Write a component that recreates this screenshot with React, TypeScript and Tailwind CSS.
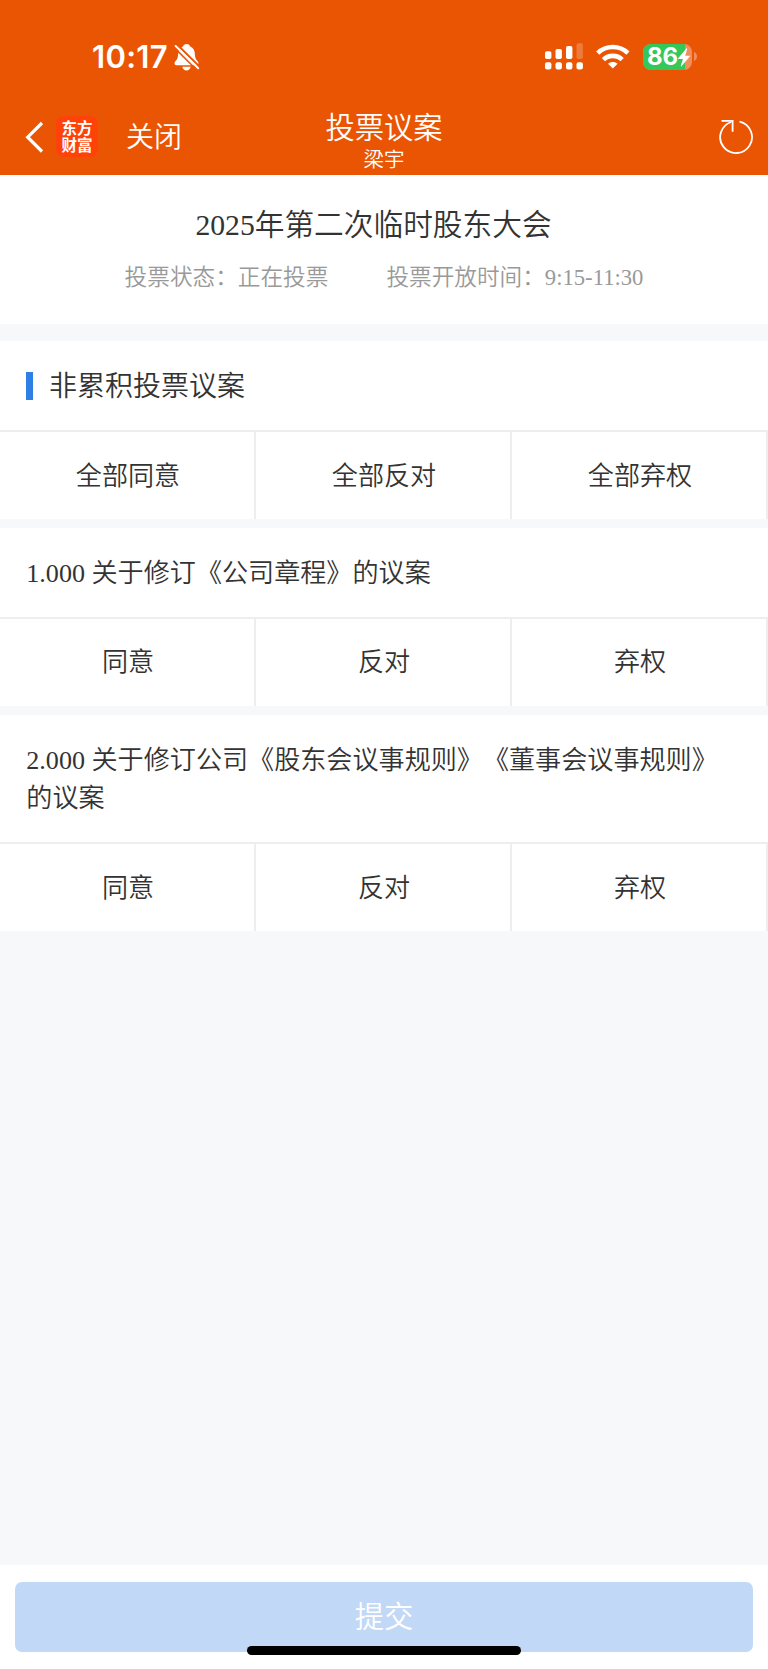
import React from "react";

function BellOff() {
  return (
    <svg className="ml-[8px] mt-[43px] h-[28px] w-[26px] shrink-0" viewBox="174 43 26 28">
      <path
        d="M186.6 44c1.9 0 3.2 1 3.6 2.5 3.2 1.3 4.6 4.2 4.7 7.9.1 3.2 1 4.8 2.3 6.4.9 1.1 1.4 2 1.2 3-.2 1-1.1 1.5-2.4 1.5h-19c-1.300 0-2.200-.5-2.400-1.500-.2-1 .3-1.900 1.200-3 1.300-1.600 2.200-3.200 2.300-6.400.1-3.700 1.700-6.600 4.900-7.900.4-1.500 1.700-2.500 3.600-2.500z"
        fill="#fff"
      />
      <path d="M182.300 66.800h8.400c-.5 2.200-2.100 3.700-4.200 3.700s-3.700-1.500-4.200-3.700z" fill="#fff" />
      <path d="M176.800 44.200L200 67.100" stroke="#ea5504" strokeWidth="2" />
      <path d="M175.600 46L198.200 68.300" stroke="#fff" strokeWidth="2" strokeLinecap="round" />
      <path d="M173 46.300L196.300 69.500" stroke="#ea5504" strokeWidth="1.600" />
    </svg>
  );
}

function Signal() {
  return (
    <svg className="h-[27px] w-[39px]" viewBox="545 43 39 27" fill="#fff">
      <rect x="545" y="51.300" width="6.400" height="7.800" rx="1.800" />
      <rect x="555.500" y="49" width="6.400" height="10.100" rx="1.800" />
      <rect x="566" y="46" width="6.400" height="13.100" rx="1.800" />
      <rect x="576.500" y="43.200" width="6.400" height="15.900" rx="1.800" opacity="0.22" />
      <rect x="545" y="62.200" width="6.400" height="7.400" rx="2" />
      <rect x="555.500" y="62.200" width="6.400" height="7.400" rx="2" />
      <rect x="566" y="62.200" width="6.400" height="7.400" rx="2" />
      <rect x="576.500" y="62.200" width="6.400" height="7.400" rx="2" />
    </svg>
  );
}

function Wifi() {
  return (
    <svg className="ml-[12px] h-[27px] w-[34px]" viewBox="596 43 34 27" fill="none" stroke="#fff" strokeWidth="4.600">
      <path d="M597.700 53.100a21.800 21.800 0 0 1 30.200 0" />
      <path d="M603.400 59.600a13.600 13.600 0 0 1 18.800 0" />
      <path d="M612.800 68.600l-4.800-4.800c2.700-2.400 6.900-2.400 9.600 0z" fill="#fff" stroke="none" />
    </svg>
  );
}

function Battery() {
  return (
    <div className="relative ml-[13px] flex h-[26px] items-center">
      <div className="h-[26px] w-[49px] overflow-hidden rounded-[8px] bg-[#f38d59]">
        <div className="h-full w-[42px] bg-[#34c759]" />
      </div>
      <svg className="ml-[2px] h-[9px] w-[3px]" viewBox="0 0 3 9">
        <path d="M0 0c2 .6 3 2.300 3 4.500S2 8.400 0 9z" fill="#f38d59" />
      </svg>
      <span className="absolute top-0 left-[4px] font-['Inter'] text-[24px] leading-[26px] font-bold">86</span>
      <svg className="absolute top-[4px] left-[34px] h-[19px] w-[14px]" viewBox="0 0 14 19">
        <path d="M9.300.5L1.200 10.300c-.3.4-.1.800.4.800h4.300L3.800 18c-.1.500.4.700.7.300l8.300-9.800c.3-.4.1-.800-.4-.800H8.200L10.200 1c.1-.6-.5-.9-.9-.5z" fill="#fff" />
      </svg>
    </div>
  );
}

function Header() {
  return (
    <header className="h-[175px] shrink-0 bg-[#ea5504] text-white">
      <div className="flex h-[100px] items-start">
        <span className="mt-[39px] ml-[92px] w-[74px] font-['Inter'] text-[31px] leading-[36px] font-semibold tracking-[0.3px] whitespace-nowrap">10:17</span>
        <BellOff />
        <div className="mt-[43px] mr-[71px] ml-auto flex items-center">
          <Signal />
          <Wifi />
          <Battery />
        </div>
      </div>
      <div className="grid h-[75px] grid-cols-3">
        <div className="flex items-start">
          <svg className="mt-[21px] ml-[25px] h-[32px] w-[19px]" viewBox="0 0 19 32" fill="none" stroke="#fff" strokeWidth="3.200">
            <path d="M17 2L2.700 16.200 17 30.500" />
          </svg>
          <div className="mt-[16px] ml-[12px] flex h-[41px] w-[42px] flex-col items-center justify-center rounded-[8px] bg-[#ff4208] text-[15.500px] leading-[17px] font-bold">
            <span>东方</span>
            <span>财富</span>
          </div>
          <span className="mt-[18px] ml-[28px] text-[28px] leading-[40px] font-[350]">关闭</span>
        </div>
        <div className="flex flex-col items-center">
          <h1 className="mt-[8px] text-[29.300px] leading-[40px] font-[350]">投票议案</h1>
          <span className="mt-[-2px] text-[20.500px] leading-[28px]">梁宇</span>
        </div>
        <svg className="mt-[19px] mr-[14px] ml-auto h-[36px] w-[36px]" viewBox="718 119 36 36" fill="none" stroke="#fff" strokeWidth="1.800">
          <path d="M739.500 121.600a15.900 15.900 0 1 1-8.300.4" />
          <path d="M721.500 120.900h11.100v10.800" />
        </svg>
      </div>
    </header>
  );
}

function Options({ labels }: { labels: string[] }) {
  return (
    <div className="grid h-[89px] grid-cols-3 border-t-2 border-[#eeeeee]">
      {labels.map((label) => (
        <button key={label} className="border-r-2 border-[#eeeeee] pt-[2px] pl-[2px] text-[26.100px] leading-[38px]">
          {label}
        </button>
      ))}
    </div>
  );
}

function Proposal({ lines }: { lines: string[] }) {
  return (
    <section className="mt-[9px] bg-white">
      <h3 className="pt-[26.700px] pb-[23.800px] pl-[26.300px] text-[26.100px] leading-[38.400px] font-[350]">
        {lines.map((line) => (
          <span key={line} className="block whitespace-nowrap">{line}</span>
        ))}
      </h3>
      <Options labels={["同意", "反对", "弃权"]} />
    </section>
  );
}

export default function App() {
  return (
    <div
      lang="zh-CN"
      className="flex h-[1669px] w-[768px] flex-col bg-[#f7f8fa] font-['Liberation_Serif','Noto_Sans_CJK_SC',sans-serif] font-[350] text-[#333333] [text-spacing-trim:space-all]"
    >
      <Header />
      <section className="h-[149px] bg-white">
        <h2 className="pt-[29px] pr-[21px] text-center text-[29.700px] leading-[42px] font-[350]">2025年第二次临时股东大会</h2>
        <div className="mt-[15px] flex justify-center gap-[58px] text-[22.650px] leading-[34px] text-[#999999]">
          <span>投票状态：正在投票</span>
          <span>投票开放时间：9:15-11:30</span>
        </div>
      </section>
      <section className="mt-[17px] bg-white">
        <div className="flex h-[89px] items-center pl-[26px]">
          <span className="h-[28px] w-[7px] bg-[#2f80e4]" />
          <h2 className="ml-[16px] pt-[2px] text-[28px] leading-[40px] font-[350]">非累积投票议案</h2>
        </div>
        <Options labels={["全部同意", "全部反对", "全部弃权"]} />
      </section>
      <Proposal lines={["1.000 关于修订《公司章程》的议案"]} />
      <Proposal lines={["2.000 关于修订公司《股东会议事规则》《董事会议事规则》", "的议案"]} />
      <footer className="relative mt-auto h-[104px] bg-white px-[15px] pt-[17px]">
        <button className="h-[70px] w-full rounded-[7px] bg-[#c2d8f7] text-[29.300px] leading-[70px] text-white">提交</button>
        <div className="absolute bottom-[14px] left-[247px] h-[9px] w-[274px] rounded-full bg-black" />
      </footer>
    </div>
  );
}
